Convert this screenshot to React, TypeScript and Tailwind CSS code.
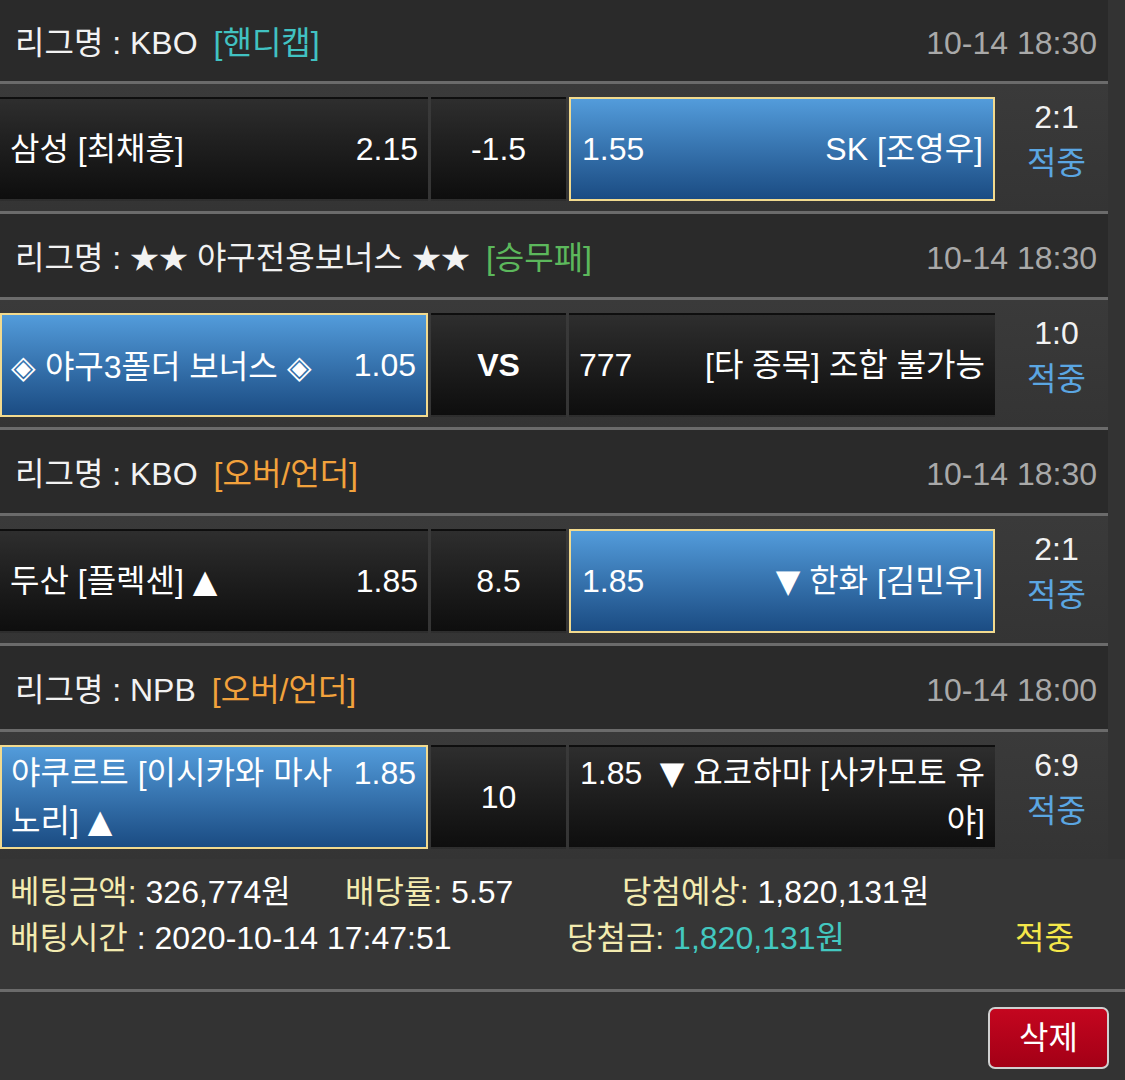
import React from "react";

type CellProps = { selected?: boolean; className?: string; children: React.ReactNode };

function Cell({ selected, className = "", children }: CellProps) {
  const base = selected
    ? "border-2 border-[#f2da8e] bg-linear-to-b from-[#539cdb] to-[#1b4c83]"
    : "border-2 border-transparent bg-linear-to-b from-[#2e2e2e] to-[#0e0e0e]";
  return <div className={`flex h-full ${base} ${className}`}>{children}</div>;
}

function Sep() {
  return <div className="h-[3px] bg-[#6b6b6b]" />;
}

function Tri({ ch }: { ch: string }) {
  return <span className="font-['DejaVu_Sans',sans-serif]">{ch}</span>;
}

function Dia() {
  return <span className="font-['Noto_Sans_CJK_KR',sans-serif]">◈</span>;
}

function Stars() {
  return <span className="text-[29px]">★★</span>;
}

function Header({ league, tag, tagColor, date, first }: { league: React.ReactNode; tag: string; tagColor: string; date: string; first?: boolean }) {
  return (
    <div className={`flex items-center justify-between bg-[#2a2a2a] pt-[4px] pl-[15px] pr-[11px] ${first ? "h-[81px]" : "h-[83px]"}`}>
      <div className="whitespace-nowrap text-[#f2f2f2]">
        리그명 : {league}
        <span className={`ml-[16px] ${tagColor}`}>{tag}</span>
      </div>
      <div className="text-[#a9a9a9]">{date}</div>
    </div>
  );
}

function Score({ score }: { score: string }) {
  return (
    <div className="flex w-[113px] flex-col items-center justify-center pl-[10px] pb-[18px] leading-[46px]">
      <div className="text-[#f2f2f2]">{score}</div>
      <div className="text-[#5ba6e2]">적중</div>
    </div>
  );
}

function MatchRow({ c1, c2, c3, score }: { c1: React.ReactNode; c2: React.ReactNode; c3: React.ReactNode; score: string }) {
  return (
    <div className="flex h-[127px] items-stretch bg-linear-to-b from-[#3a3a3a] to-[#343434] pt-[13px] pb-[10px]">
      <div className="w-[428px]">{c1}</div>
      <div className="ml-[3px] w-[135px]">{c2}</div>
      <div className="ml-[3px] w-[426px]">{c3}</div>
      <Score score={score} />
    </div>
  );
}

export default function App() {
  return (
    <div className="min-h-[1080px] w-[1125px] bg-[#333333] font-['Liberation_Sans','Noto_Sans_CJK_KR',sans-serif] text-[32px] text-white">
      <div className="w-[1108px]">
        <Header first league="KBO" tag="[핸디캡]" tagColor="text-[#41c2c2]" date="10-14 18:30" />
        <Sep />
        <MatchRow
          c1={
            <Cell className="items-center justify-between pl-[8px] pr-[8px]">
              <span>삼성 [최채흥]</span>
              <span>2.15</span>
            </Cell>
          }
          c2={
            <Cell className="items-center justify-center">
              <span>-1.5</span>
            </Cell>
          }
          c3={
            <Cell selected className="items-center justify-between pl-[11px] pr-[10px]">
              <span>1.55</span>
              <span>SK [조영우]</span>
            </Cell>
          }
          score="2:1"
        />
        <Sep />
        <Header
          league={
            <>
              <Stars /> 야구전용보너스 <Stars />
            </>
          }
          tag="[승무패]"
          tagColor="text-[#5cb85c]"
          date="10-14 18:30"
        />
        <Sep />
        <MatchRow
          c1={
            <Cell selected className="items-center justify-between pl-[9px] pr-[10px]">
              <span>
                <Dia /> 야구3폴더 보너스 <Dia />
              </span>
              <span>1.05</span>
            </Cell>
          }
          c2={
            <Cell className="items-center justify-center">
              <span className="font-bold">VS</span>
            </Cell>
          }
          c3={
            <Cell className="items-center justify-between pl-[8px] pr-[8px]">
              <span>777</span>
              <span>[타 종목] 조합 불가능</span>
            </Cell>
          }
          score="1:0"
        />
        <Sep />
        <Header league="KBO" tag="[오버/언더]" tagColor="text-[#f2a23c]" date="10-14 18:30" />
        <Sep />
        <MatchRow
          c1={
            <Cell className="items-center justify-between pl-[8px] pr-[8px]">
              <span>
                두산 [플렉센] <Tri ch="▲" />
              </span>
              <span>1.85</span>
            </Cell>
          }
          c2={
            <Cell className="items-center justify-center">
              <span>8.5</span>
            </Cell>
          }
          c3={
            <Cell selected className="items-center justify-between pl-[11px] pr-[10px]">
              <span>1.85</span>
              <span>
                <Tri ch="▼" /> 한화 [김민우]
              </span>
            </Cell>
          }
          score="2:1"
        />
        <Sep />
        <Header league="NPB" tag="[오버/언더]" tagColor="text-[#f2a23c]" date="10-14 18:00" />
        <Sep />
        <MatchRow
          c1={
            <Cell selected className="items-center justify-between pl-[9px] pr-[10px] leading-[48px]">
              <div className="flex w-full items-start justify-between">
                <span className="whitespace-nowrap">
                  야쿠르트 [이시카와 마사
                  <br />
                  노리] <Tri ch="▲" />
                </span>
                <span>1.85</span>
              </div>
            </Cell>
          }
          c2={
            <Cell className="items-center justify-center">
              <span>10</span>
            </Cell>
          }
          c3={
            <Cell className="items-center justify-between pl-[9px] pr-[8px] leading-[48px]">
              <div className="flex w-full items-start justify-between">
                <span>1.85</span>
                <span className="whitespace-nowrap text-right">
                  <Tri ch="▼" /> 요코하마 [사카모토 유
                  <br />
                  야]
                </span>
              </div>
            </Cell>
          }
          score="6:9"
        />
      </div>
      <div className="bg-[#363636] pt-[10px] pb-[28px] pl-[10px] leading-[46px]">
        <div className="flex whitespace-nowrap">
          <div className="w-[335px]">
            <span className="text-[#f3ebb0]">베팅금액:</span> 326,774원
          </div>
          <div className="w-[277px]">
            <span className="text-[#f3ebb0]">배당률:</span> 5.57
          </div>
          <div>
            <span className="text-[#f3ebb0]">당첨예상:</span> 1,820,131원
          </div>
        </div>
        <div className="flex whitespace-nowrap">
          <div className="w-[557px]">
            <span className="text-[#f3ebb0]">배팅시간</span> : 2020-10-14 17:47:51
          </div>
          <div className="w-[448px]">
            <span className="text-[#f3ebb0]">당첨금:</span> <span className="text-[#43c8c0]">1,820,131원</span>
          </div>
          <div className="text-[#f5e74a]">적중</div>
        </div>
      </div>
      <div className="h-[3px] bg-[#6b6b6b]" />
      <div className="flex justify-end pt-[15px] pr-[16px]">
        <button className="flex h-[62px] w-[121px] items-center justify-center rounded-[7px] border-2 border-[#d0d0d0] bg-linear-to-b from-[#c4061f] to-[#a30016] text-white">
          삭제
        </button>
      </div>
    </div>
  );
}
